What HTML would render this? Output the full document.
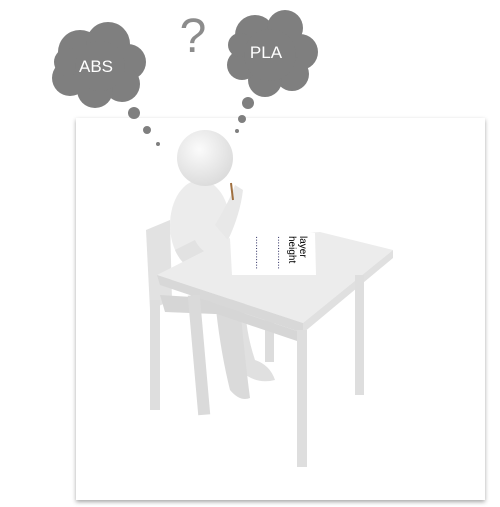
<!DOCTYPE html>
<html><head><style>
html,body{margin:0;padding:0;background:#fff;width:500px;height:507px;overflow:hidden}
svg{display:block}
</style></head><body>
<svg width="500" height="507" viewBox="0 0 500 507" xmlns="http://www.w3.org/2000/svg">
<defs>
<filter id="sh" x="-5%" y="-5%" width="110%" height="110%"><feDropShadow dx="0" dy="2" stdDeviation="2" flood-color="#000" flood-opacity="0.35"/></filter>
<radialGradient id="hd" cx="0.4" cy="0.35" r="0.7"><stop offset="0" stop-color="#fbfbfb"/><stop offset="1" stop-color="#dadada"/></radialGradient>
</defs>
<rect x="76" y="118" width="409" height="382" fill="#fff" filter="url(#sh)"/>
<g fill="#7f7f7f">
<circle cx="80" cy="52" r="22"/><circle cx="108" cy="44" r="22"/><circle cx="128" cy="62" r="18"/><circle cx="122" cy="84" r="18"/><circle cx="95" cy="90" r="18"/><circle cx="70" cy="78" r="18"/><circle cx="68" cy="62" r="14"/><circle cx="100" cy="66" r="25"/>
<circle cx="255" cy="35" r="20"/><circle cx="285" cy="28" r="18"/><circle cx="300" cy="52" r="18"/><circle cx="292" cy="74" r="17"/><circle cx="265" cy="80" r="17"/><circle cx="242" cy="65" r="15"/><circle cx="240" cy="45" r="12"/><circle cx="270" cy="55" r="26"/>
<circle cx="134" cy="113" r="6"/><circle cx="147" cy="130" r="4"/><circle cx="158" cy="144" r="2"/>
<circle cx="248" cy="103" r="6"/><circle cx="242" cy="119" r="4"/><circle cx="237" cy="131" r="2"/>
</g>
<text x="96" y="72" font-family="Liberation Sans,sans-serif" font-size="17" fill="#fff" text-anchor="middle">ABS</text>
<text x="266" y="58" font-family="Liberation Sans,sans-serif" font-size="17" fill="#fff" text-anchor="middle">PLA</text>
<text x="193" y="52" font-family="Liberation Sans,sans-serif" font-size="48" fill="#8c8c8c" text-anchor="middle">?</text>
<g fill="#e2e2e2">
<polygon points="146,230 170,220 172,300 150,310"/>
<rect x="150" y="300" width="10" height="110" fill="#dedede"/>
<rect x="265" y="320" width="9" height="42" fill="#dcdcdc"/>
<polygon points="160,295 240,300 240,315 165,312" fill="#d6d6d6"/>
</g>
<g fill="#e8e8e8">
<ellipse cx="200" cy="225" rx="30" ry="45" fill="#ececec"/>
<path d="M175 250 Q190 285 240 265 L240 255 Q205 262 195 240 Z" fill="#e2e2e2"/>
<path d="M215 225 Q230 200 235 185 L243 190 Q240 215 228 240 Z"/>
<path d="M225 300 Q230 340 240 370 Q255 385 275 380 Q270 365 255 360 Q245 330 245 300 Z" fill="#e0e0e0"/>
<path d="M215 300 Q220 350 230 390 Q240 402 250 398 Q245 360 240 305 Z" fill="#dadada"/>
</g>
<circle cx="205" cy="158" r="28" fill="url(#hd)"/>
<line x1="231" y1="183" x2="233" y2="200" stroke="#a07040" stroke-width="2"/>
<polygon points="157,275 230,238 320,232 393,250 303,323" fill="#ececec"/>
<polygon points="157,275 303,323 303,333 160,285" fill="#d8d8d8"/>
<polygon points="303,323 393,250 393,258 303,333" fill="#e0e0e0"/>
<polygon points="205,300 300,332 300,342 205,310" fill="#d6d6d6"/>
<rect x="297" y="330" width="10" height="137" fill="#dedede"/>
<rect x="355" y="275" width="9" height="120" fill="#dedede"/>
<rect x="193" y="295" width="12" height="120" fill="#dadada" transform="rotate(-5 199 355)"/>
<polygon points="230,238 258,228 315,233 316,275 232,275" fill="#fff"/>
<g transform="translate(300,236) rotate(90)" font-family="Liberation Sans,sans-serif" font-size="10" fill="#000">
<text x="0" y="0">layer</text>
<text x="0" y="11">height</text>
<text x="0" y="22" fill="#336">............</text>
<text x="0" y="44" fill="#336">............</text>
</g>
</svg>
</body></html>
